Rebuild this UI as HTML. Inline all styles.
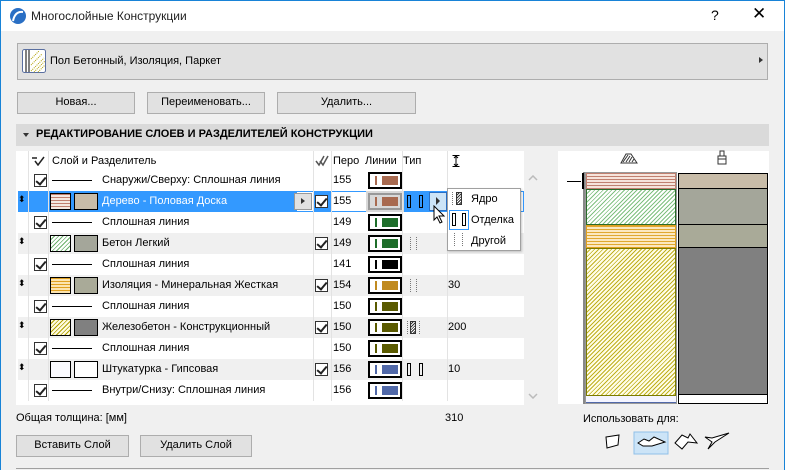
<!DOCTYPE html>
<html><head><meta charset="utf-8"><style>
*{box-sizing:border-box;margin:0;padding:0}
body{width:785px;height:470px;overflow:hidden;background:#f0f0f0;font-family:"Liberation Sans",sans-serif;font-size:11px;color:#000;position:relative}
.a{position:absolute}
.btn{position:absolute;background:#e1e1e1;border:1px solid #adadad;text-align:center;line-height:19px;font-size:11px}
.row{position:absolute;left:18px;width:506px;height:21px}
.t{position:absolute;top:4px;white-space:nowrap}
.cb{position:absolute;width:13px;height:13px;border:1px solid #333;background:#fff}
.cb:after{content:"";position:absolute;left:3px;top:0px;width:4px;height:8px;border:solid #222;border-width:0 2px 2px 0;transform:rotate(40deg)}
.ln{position:absolute;width:34px;height:17px;border:2px solid #000;background:#fff;top:2px;left:350px}
.ln i{position:absolute;left:5px;top:2px;width:2px;height:9px}
.ln b{position:absolute;left:12px;top:2px;width:16px;height:9px}
.sw{position:absolute;top:2px;width:21px;height:17px;border:1px solid #000}
.dt{position:absolute;top:4px;width:1px;height:13px;background:repeating-linear-gradient(0deg,#777 0 1px,transparent 1px 2px)}
</style></head><body>
<div class="a" style="left:0;top:0;width:785px;height:470px;border:1px solid #1883d7;border-bottom:none"></div>
<div class="a" style="left:1px;top:1px;width:783px;height:30px;background:#fff"></div>
<svg class="a" style="left:9px;top:7px" width="18" height="18"><circle cx="9" cy="9" r="8" fill="#2a6fc4"/><path d="M4 14 Q6 4 14 5" stroke="#fff" stroke-width="2" fill="none"/></svg>
<div class="a" style="left:31px;top:9px;font-size:12px;color:#222">Многослойные Конструкции</div>
<div class="a" style="left:711px;top:7px;font-size:14px">?</div>
<div class="a" style="left:752px;top:4px;font-size:17px;font-weight:300">✕</div>

<div class="a" style="left:17px;top:43px;width:751px;height:37px;background:#e1e1e1;border:1px solid #adadad"></div>
<svg class="a" style="left:22px;top:49px" width="24" height="24"><rect x="0.5" y="0.5" width="23" height="23" rx="2" fill="#fff" stroke="#5a6fa0"/><line x1="4" y1="1" x2="4" y2="23" stroke="#000"/><line x1="7" y1="1" x2="7" y2="23" stroke="#000"/><path d="M9 22 L22 9 M9 16 L20 5 M12 23 L23 12 M9 10 L17 2 M16 23 L23 16" stroke="#b0a000" stroke-dasharray="1 1"/></svg>
<div class="a" style="left:50px;top:55px;font-size:11px">Пол Бетонный, Изоляция, Паркет</div>
<div class="a" style="left:759px;top:57px;border-left:4px solid #333;border-top:3.5px solid transparent;border-bottom:3.5px solid transparent"></div>

<div class="btn" style="left:17px;top:92px;width:118px;height:22px">Новая...</div>
<div class="btn" style="left:147px;top:92px;width:118px;height:22px">Переименовать...</div>
<div class="btn" style="left:277px;top:92px;width:139px;height:22px">Удалить...</div>

<div class="a" style="left:16px;top:124px;width:753px;height:22px;background:#dadada"></div>
<div class="a" style="left:23px;top:133px;border-top:4px solid #333;border-left:3.5px solid transparent;border-right:3.5px solid transparent"></div>
<div class="a" style="left:36px;top:128px;font-weight:bold;font-size:11px">РЕДАКТИРОВАНИЕ СЛОЕВ И РАЗДЕЛИТЕЛЕЙ КОНСТРУКЦИИ</div>

<div class="a" style="left:16px;top:151px;width:524px;height:254px;background:#fff"></div>
<div class="a" style="left:524px;top:151px;width:16px;height:254px;background:#f0f0f0"></div>
<svg class="a" style="left:528px;top:175px" width="10" height="6"><path d="M1 5 L5 1 L9 5" stroke="#bbb" fill="none" stroke-width="1.5"/></svg>
<svg class="a" style="left:528px;top:393px" width="10" height="6"><path d="M1 1 L5 5 L9 1" stroke="#bbb" fill="none" stroke-width="1.5"/></svg>
<div class="row" style="top:151px;background:#fff">
<svg class="a" style="left:13px;top:5px" width="14" height="10"><path d="M1 2 L6 2 M4 5 L7 9 L13 1" stroke="#222" stroke-width="1.5" fill="none"/></svg>
<div class="t" style="left:34px">Слой и Разделитель</div>
<svg class="a" style="left:297px;top:4px" width="14" height="12"><path d="M1 6 L4 10 L9 1 M5 6 L8 10 L13 1" stroke="#555" stroke-width="1.5" fill="none"/></svg>
<div class="t" style="left:315px">Перо</div>
<div class="t" style="left:347px">Линии</div>
<div class="t" style="left:385px">Тип</div>
<svg class="a" style="left:434px;top:4px" width="8" height="12"><path d="M0.5 0.5 H7.5 M0.5 11.5 H7.5 M4 1 V11 M2 3 L4 1 L6 3 M2 9 L4 11 L6 9" stroke="#000" fill="none"/></svg>
</div>
<div class="a" style="left:18px;top:170px;width:506px;height:1px;background:#e5e5e5"></div>

<div class="row" style="top:170px;background:#fff">
<div class="cb" style="left:16px;top:4px"></div><div class="a" style="left:34px;top:10px;width:40px;height:1px;background:#000"></div>
<div class="t" style="left:84px">Снаружи/Сверху: Сплошная линия</div>
<div class="t" style="left:315px">155</div><div class="ln"><i style="background:#a86a50"></i><b style="background:#a86a50"></b></div></div>

<div class="row" style="top:191px;background:#fff">
<div class="a" style="left:0;top:0;width:279px;height:21px;background:#3399ff"></div>
<div class="a" style="left:296px;top:0;width:18px;height:21px;background:#3399ff"></div>
<div class="a" style="left:386px;top:0;width:44px;height:21px;background:#3399ff"></div>
<div class="a" style="left:0;top:0;width:506px;height:21px;border:1px solid #3399ff"></div>
<div class="t" style="left:0px;top:3px;font-size:9px">⬍</div>
<div class="sw" style="left:32px;background:repeating-linear-gradient(0deg,#f5e8e0 0 2px,#c08070 2px 3px)"></div>
<div class="sw" style="left:56px;background:#c8bca8;width:24px"></div>
<div class="t" style="left:84px;color:#fff">Дерево - Половая Доска</div>
<div class="a" style="left:276px;top:2px;width:18px;height:17px;background:#e1e1e1;border:1px solid #999"></div>
<div class="a" style="left:283px;top:7px;border-left:4px solid #333;border-top:3.5px solid transparent;border-bottom:3.5px solid transparent"></div>
<div class="cb" style="left:297px;top:4px"></div>
<div class="t" style="left:315px">155</div>
<div class="a" style="left:348px;top:0;width:38px;height:21px;background:#d9d9d9"></div>
<div class="ln" style="background:#d9d9d9;border-color:#999"><i style="background:#a86a50"></i><b style="background:#a86a50"></b></div>
<div class="a" style="left:389px;top:4px;width:4px;height:13px;border:1px solid #000"></div><div class="a" style="left:401px;top:4px;width:4px;height:13px;border:1px solid #000"></div>
<div class="a" style="left:411px;top:1px;width:18px;height:19px;background:#cce4f7;border:1px solid #2a6fc4"></div>
<div class="a" style="left:418px;top:6px;border-left:4px solid #333;border-top:4px solid transparent;border-bottom:4px solid transparent"></div>
</div>

<div class="row" style="top:212px;background:#fff">
<div class="cb" style="left:16px;top:4px"></div><div class="a" style="left:34px;top:10px;width:40px;height:1px;background:#000"></div>
<div class="t" style="left:84px">Сплошная линия</div>
<div class="t" style="left:315px">149</div><div class="ln"><i style="background:#1e6e2a"></i><b style="background:#1e6e2a"></b></div></div>

<div class="row" style="top:233px;background:#f0f0f0">
<div class="t" style="left:0px;top:3px;font-size:9px">⬍</div>
<div class="sw" style="left:32px;background:repeating-linear-gradient(135deg,#fff 0 2px,#6ab06a 2px 3px)"></div>
<div class="sw" style="left:56px;background:#a4a69a;width:24px"></div>
<div class="t" style="left:84px">Бетон Легкий</div>
<div class="cb" style="left:297px;top:4px"></div>
<div class="t" style="left:315px">149</div><div class="ln"><i style="background:#1e6e2a"></i><b style="background:#1e6e2a"></b></div>
<div class="dt" style="left:392px"></div><div class="dt" style="left:398px"></div></div>

<div class="row" style="top:254px;background:#fff">
<div class="cb" style="left:16px;top:4px"></div><div class="a" style="left:34px;top:10px;width:40px;height:1px;background:#000"></div>
<div class="t" style="left:84px">Сплошная линия</div>
<div class="t" style="left:315px">141</div><div class="ln"><i style="background:#000"></i><b style="background:#000"></b></div></div>

<div class="row" style="top:275px;background:#f0f0f0">
<div class="t" style="left:0px;top:3px;font-size:9px">⬍</div>
<div class="sw" style="left:32px;background:repeating-linear-gradient(0deg,#fce4b0 0 2px,#e0a020 2px 3px)"></div>
<div class="sw" style="left:56px;background:#a9aa98;width:24px"></div>
<div class="t" style="left:84px">Изоляция - Минеральная Жесткая</div>
<div class="cb" style="left:297px;top:4px"></div>
<div class="t" style="left:315px">154</div><div class="ln"><i style="background:#c08a20"></i><b style="background:#c08a20"></b></div>
<div class="dt" style="left:392px"></div><div class="dt" style="left:398px"></div><div class="t" style="left:430px">30</div></div>

<div class="row" style="top:296px;background:#fff">
<div class="cb" style="left:16px;top:4px"></div><div class="a" style="left:34px;top:10px;width:40px;height:1px;background:#000"></div>
<div class="t" style="left:84px">Сплошная линия</div>
<div class="t" style="left:315px">150</div><div class="ln"><i style="background:#5a5a00"></i><b style="background:#5a5a00"></b></div></div>

<div class="row" style="top:317px;background:#f0f0f0">
<div class="t" style="left:0px;top:3px;font-size:9px">⬍</div>
<div class="sw" style="left:32px;background:repeating-linear-gradient(135deg,#fffbe0 0 2px,#b0a000 2px 3px)"></div>
<div class="sw" style="left:56px;background:#808080;width:24px"></div>
<div class="t" style="left:84px">Железобетон - Конструкционный</div>
<div class="cb" style="left:297px;top:4px"></div>
<div class="t" style="left:315px">150</div><div class="ln"><i style="background:#5a5a00"></i><b style="background:#5a5a00"></b></div>
<div class="dt" style="left:389px"></div><div class="a" style="left:392px;top:4px;width:6px;height:13px;border:1px solid #333;background:repeating-linear-gradient(135deg,#fff 0 1px,#333 1px 2px)"></div><div class="dt" style="left:401px"></div><div class="t" style="left:430px">200</div></div>

<div class="row" style="top:338px;background:#fff">
<div class="cb" style="left:16px;top:4px"></div><div class="a" style="left:34px;top:10px;width:40px;height:1px;background:#000"></div>
<div class="t" style="left:84px">Сплошная линия</div>
<div class="t" style="left:315px">150</div><div class="ln"><i style="background:#5a5a00"></i><b style="background:#5a5a00"></b></div></div>

<div class="row" style="top:359px;background:#f0f0f0">
<div class="t" style="left:0px;top:3px;font-size:9px">⬍</div>
<div class="sw" style="left:32px;background:#fafaff"></div>
<div class="sw" style="left:56px;background:#fff;width:24px"></div>
<div class="t" style="left:84px">Штукатурка - Гипсовая</div>
<div class="cb" style="left:297px;top:4px"></div>
<div class="t" style="left:315px">156</div><div class="ln"><i style="background:#5068a8"></i><b style="background:#5068a8"></b></div>
<div class="a" style="left:389px;top:4px;width:4px;height:13px;border:1px solid #000"></div><div class="a" style="left:401px;top:4px;width:4px;height:13px;border:1px solid #000"></div><div class="t" style="left:430px">10</div></div>

<div class="row" style="top:380px;background:#fff">
<div class="cb" style="left:16px;top:4px"></div><div class="a" style="left:34px;top:10px;width:40px;height:1px;background:#000"></div>
<div class="t" style="left:84px">Внутри/Снизу: Сплошная линия</div>
<div class="t" style="left:315px">156</div><div class="ln"><i style="background:#5068a8"></i><b style="background:#5068a8"></b></div></div>

<div class="a" style="left:28px;top:151px;width:1px;height:250px;background:#e3e3e3"></div>
<div class="a" style="left:48px;top:151px;width:1px;height:250px;background:#e3e3e3"></div>
<div class="a" style="left:313px;top:151px;width:1px;height:250px;background:#e3e3e3"></div>
<div class="a" style="left:331px;top:151px;width:1px;height:250px;background:#e3e3e3"></div>
<div class="a" style="left:402px;top:151px;width:1px;height:250px;background:#e3e3e3"></div>
<div class="a" style="left:447px;top:151px;width:1px;height:250px;background:#e3e3e3"></div>

<div class="a" style="left:447px;top:188px;width:74px;height:63px;background:#fff;border:1px solid #a0a0a0;box-shadow:1px 1px 2px rgba(0,0,0,.2)"></div>
<div class="dt" style="left:452px;top:192px"></div>
<div class="a" style="left:456px;top:192px;width:6px;height:13px;border:1px solid #333;background:repeating-linear-gradient(135deg,#fff 0 1px,#333 1px 2px)"></div>
<div class="a" style="left:471px;top:193px">Ядро</div>
<div class="a" style="left:449px;top:210px;width:20px;height:20px;border:1px solid #3399ff"></div>
<div class="a" style="left:452px;top:213px;width:4px;height:13px;border:1px solid #000"></div><div class="a" style="left:462px;top:213px;width:4px;height:13px;border:1px solid #000"></div>
<div class="a" style="left:471px;top:214px">Отделка</div>
<div class="dt" style="left:454px;top:233px"></div><div class="dt" style="left:462px;top:233px"></div>
<div class="a" style="left:471px;top:235px">Другой</div>
<svg class="a" style="left:433px;top:205px" width="14" height="20"><path d="M1 1 L1 15 L4 12 L7 18 L9 17 L6 11 L11 11 Z" fill="#fff" stroke="#000"/></svg>

<div class="a" style="left:16px;top:412px">Общая толщина: [мм]</div>
<div class="a" style="left:445px;top:412px">310</div>
<div class="btn" style="left:16px;top:435px;width:113px;height:22px">Вставить Слой</div>
<div class="btn" style="left:140px;top:435px;width:112px;height:22px">Удалить Слой</div>
<div class="a" style="left:16px;top:468px;width:753px;height:1px;background:#a0a0a0"></div>

<div class="a" style="left:558px;top:151px;width:211px;height:253px;background:#fff"></div>
<svg class="a" style="left:620px;top:152px" width="18" height="12"><path d="M1 11 L6 2 L11 2 L17 11 Z" fill="#fff" stroke="#333"/><path d="M3 10 L8 3 M6 10 L10 4 M9 10 L12 5 M12 10 L14 7" stroke="#333"/></svg>
<svg class="a" style="left:716px;top:150px" width="12" height="15"><path d="M4 1 H8 V6 H4 Z M2 6 H10 V9 H2 Z M2 9 L2 14 H10 V9" fill="#fff" stroke="#333"/></svg>
<div class="a" style="left:583px;top:172px;width:2px;height:232px;background:#888"></div>
<div class="a" style="left:585px;top:172px;width:92px;height:232px;border:1px solid #999"></div>
<div class="a" style="left:586px;top:173px;width:90px;height:16px;background:repeating-linear-gradient(0deg,#f6e4dc 0 2px,#c08070 2px 3px);border:1px solid #c08070"></div>
<div class="a" style="left:586px;top:189px;width:90px;height:36px;background:repeating-linear-gradient(135deg,#fff 0 2px,#80c080 2px 3px);border:1px solid #2a6a2a"></div>
<div class="a" style="left:586px;top:225px;width:90px;height:23px;background:repeating-linear-gradient(0deg,#fce8c0 0 2px,#e0a830 2px 3px);border:1px solid #e0a020"></div>
<div class="a" style="left:586px;top:248px;width:90px;height:148px;background:repeating-linear-gradient(135deg,#fffde8 0 2px,#c0b020 2px 3px);border:1px solid #7a7a00"></div>
<div class="a" style="left:586px;top:396px;width:90px;height:7px;background:#f4f4ff;border-bottom:1px solid #5068a8"></div>
<div class="a" style="left:678px;top:173px;width:90px;height:231px;border:1px solid #000;background:#fff"></div>
<div class="a" style="left:679px;top:174px;width:88px;height:15px;background:#c8bca8;border-bottom:1px solid #000"></div>
<div class="a" style="left:679px;top:189px;width:88px;height:36px;background:#a4a69a;border-bottom:1px solid #000"></div>
<div class="a" style="left:679px;top:225px;width:88px;height:23px;background:#a9aa98;border-bottom:1px solid #000"></div>
<div class="a" style="left:679px;top:248px;width:88px;height:147px;background:#808080;border-bottom:1px solid #000"></div>
<div class="a" style="left:567px;top:181px;width:14px;height:1px;background:#000"></div>
<div class="a" style="left:582px;top:173px;width:2px;height:16px;background:#000"></div>
<div class="a" style="left:558px;top:404px;width:211px;height:50px;background:#f0f0f0"></div>
<div class="a" style="left:583px;top:413px">Использовать для:</div>
<svg class="a" style="left:600px;top:430px" width="145" height="26">
<rect x="34" y="2" width="34" height="22" fill="#cce4f7" stroke="#90c0e8"/>
<path d="M6 7 L19 5 L18 15 L7 18 Z" fill="#fff" stroke="#000"/>
<path d="M38 13 L44 9 L49 11 L54 7 L65 12 L52 16 L43 16 Z" fill="#fff" stroke="#000"/>
<path d="M75 13 L82 5 L88 8 L90 4 L97 13 L88 12 L82 19 Z" fill="#fff" stroke="#000"/>
<path d="M105 7 L112 12 L108 19 L115 12 L129 3 L112 8 Z" fill="#fff" stroke="#000"/>
</svg>
</body></html>
